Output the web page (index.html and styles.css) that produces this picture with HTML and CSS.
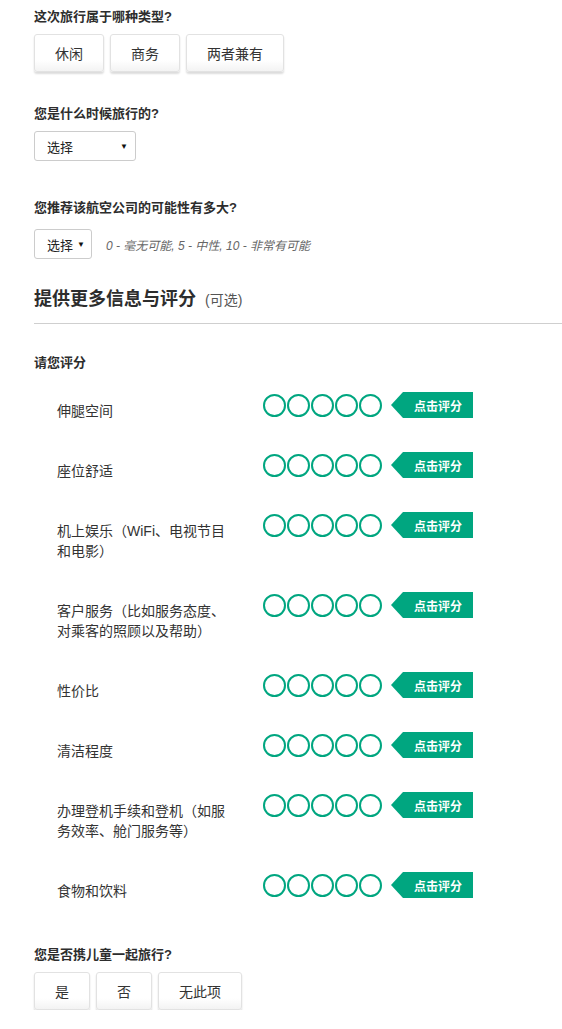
FILE: index.html
```html
<!DOCTYPE html>
<html lang="zh-CN">
<head>
<meta charset="utf-8">
<title>评分</title>
<link rel="stylesheet" href="styles.css">
</head>
<body>
<div class="page">
  <div class="q q1">这次旅行属于哪种类型?</div>
  <div class="btns">
    <div class="btn">休闲</div>
    <div class="btn">商务</div>
    <div class="btn">两者兼有</div>
  </div>

  <div class="q q2">您是什么时候旅行的?</div>
  <div class="sel sel-wide"><span>选择</span><span class="arr">▼</span></div>

  <div class="q q3">您推荐该航空公司的可能性有多大?</div>
  <div class="sel-row">
    <div class="sel sel-narrow"><span>选择</span><span class="arr">▼</span></div>
    <span class="hint">0 - 毫无可能, 5 - 中性, 10 - 非常有可能</span>
  </div>

  <div class="sect">提供更多信息与评分 <span class="opt">(可选)</span></div>

  <div class="q q4">请您评分</div>

  <div class="rows">
    <div class="row"><div class="lbl">伸腿空间</div><div class="dots"><i></i><i></i><i></i><i></i><i></i></div><div class="tag">点击评分</div></div>
    <div class="row"><div class="lbl">座位舒适</div><div class="dots"><i></i><i></i><i></i><i></i><i></i></div><div class="tag">点击评分</div></div>
    <div class="row"><div class="lbl">机上娱乐（WiFi、电视节目和电影）</div><div class="dots"><i></i><i></i><i></i><i></i><i></i></div><div class="tag">点击评分</div></div>
    <div class="row"><div class="lbl">客户服务（比如服务态度、对乘客的照顾以及帮助）</div><div class="dots"><i></i><i></i><i></i><i></i><i></i></div><div class="tag">点击评分</div></div>
    <div class="row"><div class="lbl">性价比</div><div class="dots"><i></i><i></i><i></i><i></i><i></i></div><div class="tag">点击评分</div></div>
    <div class="row"><div class="lbl">清洁程度</div><div class="dots"><i></i><i></i><i></i><i></i><i></i></div><div class="tag">点击评分</div></div>
    <div class="row"><div class="lbl">办理登机手续和登机（如服务效率、舱门服务等）</div><div class="dots"><i></i><i></i><i></i><i></i><i></i></div><div class="tag">点击评分</div></div>
    <div class="row"><div class="lbl">食物和饮料</div><div class="dots"><i></i><i></i><i></i><i></i><i></i></div><div class="tag">点击评分</div></div>
  </div>

  <div class="q q5">您是否携儿童一起旅行?</div>
  <div class="btns">
    <div class="btn">是</div>
    <div class="btn">否</div>
    <div class="btn">无此项</div>
  </div>
</div>
</body>
</html>
```

FILE: styles.css
```css
* { box-sizing: border-box; }
html, body { margin: 0; padding: 0; background: #fff; }
body {
  font-family: "Liberation Sans", "Noto Sans CJK SC", sans-serif;
  color: #333;
  font-size: 14px;
}
.page { padding: 8px 0 0 34px; }

.q {
  font-size: 13px;
  font-weight: bold;
  line-height: 18px;
  color: #2d2d2d;
}
.q1 { margin-bottom: 8px; }
.q2 { margin-top: 33px; margin-bottom: 8px; }
.q3 { margin-top: 38px; margin-bottom: 12px; }
.q4 { margin-top: 30px; margin-bottom: 20px; }
.q5 { margin-top: 14px; margin-bottom: 8px; }

.btns { display: flex; gap: 6px; }
.btn {
  height: 38px;
  padding: 0 20px;
  border: 1px solid #e2e2e2;
  border-radius: 3px;
  background: linear-gradient(#fff 70%, #f3f3f3);
  box-shadow: 0 2px 2px rgba(0,0,0,0.14);
  display: flex;
  align-items: center;
  justify-content: center;
  font-size: 14px;
  color: #333;
}

.sel {
  height: 30px;
  border: 1px solid #ccc;
  border-radius: 3px;
  background: #fff;
  display: flex;
  align-items: center;
  justify-content: space-between;
  padding: 0 7px 0 12px;
  font-size: 13px;
  color: #222;
}
.sel-wide { width: 102px; }
.sel-narrow { width: 58px; padding-right: 6px; }
.arr { font-size: 8px; color: #111; }
.sel-row { display: flex; align-items: center; gap: 14px; }
.hint { font-size: 12px; font-style: italic; color: #666; }

.sect {
  margin-top: 28px;
  font-size: 18px;
  font-weight: bold;
  line-height: 24px;
  padding-bottom: 11px;
  border-bottom: 1px solid #cfcfcf;
  color: #2d2d2d;
}
.opt { font-size: 14px; font-weight: normal; color: #555; margin-left: 4px; }

.rows { padding-left: 23px; }
.row {
  display: flex;
  align-items: flex-start;
  padding-bottom: 31px;
}
.lbl {
  width: 175px;
  margin-right: 31px;
  padding-top: 9px;
  line-height: 20px;
  font-size: 14px;
  color: #333;
}
.dots { display: flex; gap: 1px; padding-top: 2px; }
.dots i {
  display: block;
  width: 23px;
  height: 23px;
  border: 2.5px solid #00a680;
  border-radius: 50%;
}
.tag {
  margin-left: 9px;
  width: 82px;
  height: 26px;
  background: #00a680;
  clip-path: polygon(12px 0, 100% 0, 100% 100%, 12px 100%, 0 50%);
  color: #fff;
  font-size: 12px;
  font-weight: bold;
  display: flex;
  align-items: center;
  justify-content: center;
  padding-left: 12px;
}
```
